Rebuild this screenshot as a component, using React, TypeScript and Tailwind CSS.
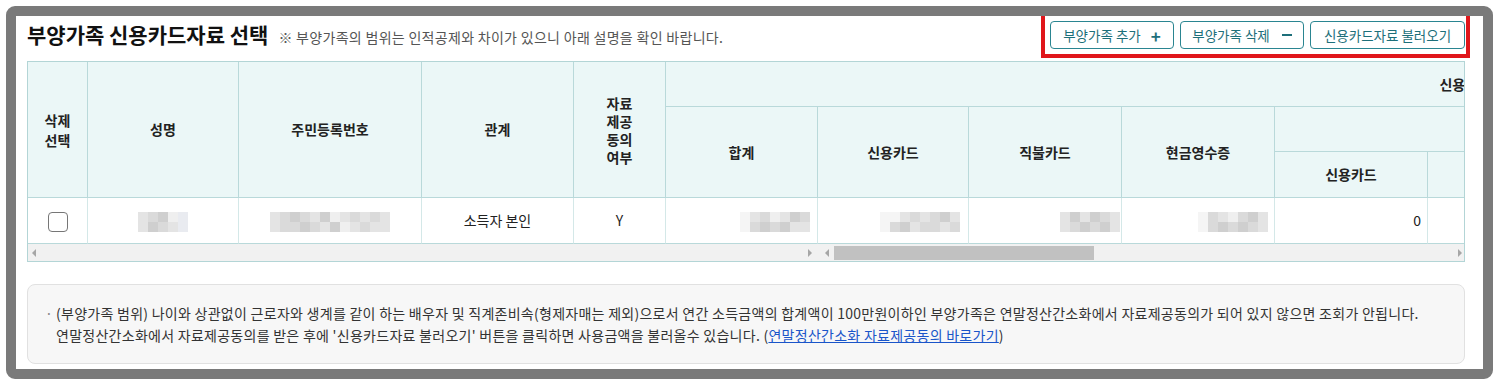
import React from "react";

const KR = { fontFamily: '"Noto Sans CJK KR", "Noto Sans", sans-serif' };

// mosaic shades used for the masked personal values
const shades = [
  "bg-[#efefef]",
  "bg-[#e4e4e4]",
  "bg-[#dadada]",
  "bg-[#cfcfcf]",
  "bg-[#e9ebf0]",
  "bg-[#f5f5f5]",
];

const Blur = ({ top, bottom }: { top: string; bottom: string }) => (
  <span className="inline-flex flex-col align-middle">
    {[top, bottom].map((row, r) => (
      <span key={r} className="flex">
        {row.split("").map((c, i) => (
          <span key={i} className={`block w-[10px] h-[10px] ${shades[Number(c)]}`} />
        ))}
      </span>
    ))}
  </span>
);

const Arrow = ({ dir }: { dir: "left" | "right" }) => (
  <span
    className={`block w-0 h-0 border-y-[4px] border-y-transparent ${
      dir === "left" ? "border-r-[4px] border-r-[#a6a6a6]" : "border-l-[4px] border-l-[#a6a6a6]"
    }`}
  />
);

const th =
  "bg-[#ebf7f7] border-r border-b border-[#b9d9da] text-[14px] font-bold text-[#222] text-center align-middle p-0";
const td = "border-r border-[#d4e8e8] border-b border-b-[#b9d9da] text-[14px] text-[#222] align-middle p-0";

const widths = [60, 151, 183, 152, 92, 152, 151, 153, 153, 153, 153, 153, 153, 153, 153, 153];

export default function App() {
  return (
    <div className="w-[1499px] h-[386px] bg-white pt-[6px] pl-[6px]" style={KR}>
      <div className="relative w-[1487px] h-[373px] border-[10px] border-[#7a7a7a] rounded-[9px] bg-white pl-[11px] pr-[18px]">
        {/* title row */}
        <div className="flex items-center justify-between pt-[5px] h-[45px] pb-[12px]">
          <div className="flex items-baseline">
            <h1 className="text-[21px] font-bold text-[#111]">부양가족 신용카드자료 선택</h1>
            <span className="ml-[10px] text-[14px] tracking-[0.3px] text-[#555]">
              ※ 부양가족의 범위는 인적공제와 차이가 있으니 아래 설명을 확인 바랍니다.
            </span>
          </div>
          <div className="flex gap-[6px]">
            <button className="flex items-center justify-center gap-[10px] w-[124px] h-[28px] rounded-[4px] border border-[#2a8591] bg-white text-[13.5px] text-[#1d6f7a]">
              부양가족 추가
              <span className="text-[17px] font-bold leading-none">+</span>
            </button>
            <button className="flex items-center justify-center gap-[12px] w-[124px] h-[28px] rounded-[4px] border border-[#2a8591] bg-white text-[13.5px] text-[#1d6f7a]">
              부양가족 삭제
              <span className="block w-[10px] h-[2px] bg-[#1d6f7a]" />
            </button>
            <button className="flex items-center justify-center w-[155px] h-[28px] rounded-[4px] border border-[#2a8591] bg-white text-[13.5px] text-[#1d6f7a]">
              신용카드자료 불러오기
            </button>
          </div>
        </div>

        {/* table */}
        <div className="w-[1438px] border border-[#b3d5d6] overflow-hidden">
          <table className="table-fixed border-separate border-spacing-0 w-[2318px]">
            <colgroup>
              {widths.map((w, i) => (
                <col key={i} style={{ width: w }} />
              ))}
            </colgroup>
            <thead>
              <tr className="h-[45px]">
                <th rowSpan={3} className={`${th} leading-[20px]`}>
                  삭제
                  <br />
                  선택
                </th>
                <th rowSpan={3} className={th}>성명</th>
                <th rowSpan={3} className={th}>주민등록번호</th>
                <th rowSpan={3} className={th}>관계</th>
                <th rowSpan={3} className={`${th} leading-[18px]`}>
                  자료
                  <br />
                  제공
                  <br />
                  동의
                  <br />
                  여부
                </th>
                <th colSpan={11} className={`${th} pr-[10px]`}>신용카드 등 사용금액</th>
              </tr>
              <tr className="h-[45px]">
                <th rowSpan={2} className={th}>합계</th>
                <th rowSpan={2} className={th}>신용카드</th>
                <th rowSpan={2} className={th}>직불카드</th>
                <th rowSpan={2} className={th}>현금영수증</th>
                <th colSpan={3} className={`${th} pl-[14px]`}>전통시장사용분</th>
                <th colSpan={3} className={th}>대중교통이용분</th>
                <th rowSpan={2} className={th}>도서공연 등</th>
              </tr>
              <tr className="h-[46px]">
                <th className={th}>신용카드</th>
                <th className={th}>직불카드</th>
                <th className={th}>현금영수증</th>
                <th className={th}>신용카드</th>
                <th className={th}>직불카드</th>
                <th className={th}>현금영수증</th>
              </tr>
            </thead>
            <tbody>
              <tr className="h-[46px]">
                <td className={`${td} text-center`}>
                  <span className="inline-block align-middle w-[20px] h-[20px] rounded-[4px] border border-[#767676] bg-white" />
                </td>
                <td className={`${td} text-center`}>
                  <Blur top="12304" bottom="13214" />
                </td>
                <td className={`${td} text-center`}>
                  <Blur top="123213012121" bottom="122321301211" />
                </td>
                <td className={`${td} text-center`}>소득자 본인</td>
                <td className={`${td} text-center`}>Y</td>
                <td className={`${td} text-right pr-[7px]`}>
                  <Blur top="5120132" bottom="5232311" />
                </td>
                <td className={`${td} text-right pr-[8px]`}>
                  <Blur top="55121231" bottom="52312212" />
                </td>
                <td className={`${td} text-right pr-[1px]`}>
                  <Blur top="131321" bottom="123231" />
                </td>
                <td className={`${td} text-right pr-[6px]`}>
                  <Blur top="5210231" bottom="5232321" />
                </td>
                {Array.from({ length: 7 }).map((_, i) => (
                  <td key={i} className={`${td} text-right pr-[6px]`}>
                    0
                  </td>
                ))}
              </tr>
            </tbody>
          </table>
          {/* horizontal scrollbars */}
          <div className="flex h-[17px] bg-[#f1f1f1]">
            <div className="w-[789px] flex items-center justify-between pl-[4px] pr-[5px]">
              <Arrow dir="left" />
              <Arrow dir="right" />
            </div>
            <div className="flex-1 flex items-center pl-[8px] pr-[2px]">
              <Arrow dir="left" />
              <span className="block ml-[5px] w-[260px] h-[14px] bg-[#c1c1c1]" />
              <span className="flex-1" />
              <Arrow dir="right" />
            </div>
          </div>
        </div>

        {/* notice */}
        <div className="mt-[22px] w-[1438px] h-[80px] flex items-center rounded-[8px] border border-[#e1e1e1] bg-[#f7f7f7] pl-[17px]">
          <div className="flex text-[14px] tracking-[0.27px] leading-[22px] text-[#333]">
            <span className="w-[11px] text-[#888]">·</span>
            <p>
              (부양가족 범위) 나이와 상관없이 근로자와 생계를 같이 하는 배우자 및 직계존비속(형제자매는 제외)으로서 연간 소득금액의 합계액이 100만원이하인 부양가족은 연말정산간소화에서 자료제공동의가 되어 있지 않으면 조회가 안됩니다.
              <br />
              연말정산간소화에서 자료제공동의를 받은 후에 '신용카드자료 불러오기' 버튼을 클릭하면 사용금액을 불러올수 있습니다. (
              <a className="text-[#1a55c9] underline">연말정산간소화 자료제공동의 바로가기</a>)
            </p>
          </div>
        </div>

        {/* highlight annotation */}
        <div className="absolute left-[1025px] top-0 w-[429px] h-[42px] border-x-4 border-b-4 border-[#e0161b] pointer-events-none" />
      </div>
    </div>
  );
}
